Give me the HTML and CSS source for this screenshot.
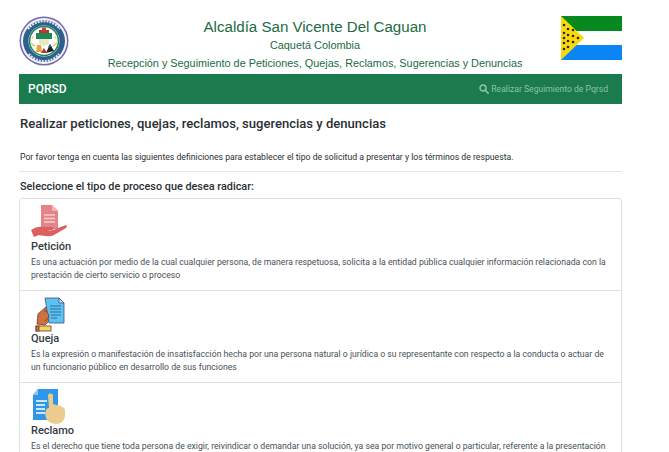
FILE: index.html
```html
<!DOCTYPE html>
<html lang="es">
<head>
<meta charset="utf-8">
<title>PQRSD</title>
<link rel="stylesheet" href="styles.css">
</head>
<body>
<div class="page">
  <header class="head">
    <svg class="logo" viewBox="0 0 50 50" aria-hidden="true">
      <circle cx="25" cy="25" r="24.500" fill="#7468ad"/>
      <circle cx="25" cy="25" r="23" fill="#f4f4fa"/>
      <circle cx="25" cy="25" r="21" fill="#2f5f8f"/>
      <circle cx="25" cy="25" r="15.500" fill="#fff"/>
      <path d="M9 13 A20 20 0 0 1 41 13 M10 38 A19 19 0 0 0 40 38" fill="none" stroke="#dfe6f0" stroke-width="2.400" stroke-dasharray="2 1"/>
      <circle cx="25" cy="25" r="14.500" fill="none" stroke="#1d8a55" stroke-width="1.600"/>
      <path d="M16 30a14 14 0 0 1-4-3M34 30a14 14 0 0 0 4-3M13 21l1 1M37 21l-1 1" stroke="#e2cf5f" stroke-width="1.800" fill="none"/>
      <path d="M20 14h10v5h-10z" fill="#b8332c"/>
      <path d="M23 11.500h4v4h-4z" fill="#c4403a"/>
      <path d="M17 17h16v6h-16z" fill="#1d8a55"/>
      <path d="M20 23h10v5l-5 2-5-2z" fill="#ece7c4"/>
      <path d="M27 37l4-9 4 7z" fill="#222"/>
      <path d="M17 36l1-7h4l1 7z" fill="#e8a43a"/>
      <path d="M22 37l3-5 3 5z" fill="#b8332c"/>
      <path d="M29 31l2-3 2 3z" fill="#2c5ea8"/>
    </svg>
    <div class="titles">
      <h1 class="title">Alcaldía San Vicente Del Caguan</h1>
      <p class="place">Caquetá Colombia</p>
      <p class="sub">Recepción y Seguimiento de Peticiones, Quejas, Reclamos, Sugerencias y Denuncias</p>
    </div>
    <svg class="flag" viewBox="0 0 61 44" aria-hidden="true">
      <rect width="61" height="15" fill="#078a1d"/>
      <rect y="15" width="61" height="14" fill="#fff"/>
      <rect y="29" width="61" height="15" fill="#0a85f5"/>
      <path d="M0 0L23 22 0 44z" fill="#f9d80f"/>
      <g fill="#2b2a10">
        <circle cx="3" cy="9" r="1.300"/><circle cx="7" cy="13" r="1.300"/><circle cx="3" cy="17" r="1.300"/>
        <circle cx="7" cy="19" r="1.300"/><circle cx="12" cy="14" r="1.300"/><circle cx="3" cy="22" r="1.300"/>
        <circle cx="12" cy="20" r="1.300"/><circle cx="17" cy="22" r="1.300"/><circle cx="7" cy="25" r="1.300"/>
        <circle cx="12" cy="26" r="1.300"/><circle cx="3" cy="27" r="1.300"/><circle cx="7" cy="31" r="1.300"/>
        <circle cx="3" cy="33" r="1.300"/>
      </g>
    </svg>
  </header>

  <nav class="bar">
    <a class="brand" href="#">PQRSD</a>
    <a class="track" href="#">
      <svg class="lens" viewBox="0 0 12 12" aria-hidden="true">
        <circle cx="4.800" cy="4.800" r="3.600" fill="none" stroke="currentColor" stroke-width="1.800"/>
        <path d="M7.500 7.500L11 11" stroke="currentColor" stroke-width="2" stroke-linecap="round"/>
      </svg>
      Realizar Seguimiento de Pqrsd
    </a>
  </nav>

  <div class="body">
    <h2 class="heading">Realizar peticiones, quejas, reclamos, sugerencias y denuncias</h2>
    <p class="intro">Por favor tenga en cuenta las siguientes definiciones para establecer el tipo de solicitud a presentar y los términos de respuesta.</p>
  </div>
  <hr class="rule">
  <h3 class="select">Seleccione el tipo de proceso que desea radicar:</h3>

  <div class="list">
    <article class="item">
      <svg class="icon" viewBox="0 0 36 36" aria-hidden="true">
        <path d="M10 0h11l6 6v18H10z" fill="#e58488"/>
        <path d="M21 0l6 6h-6z" fill="#f2b5b5"/>
        <path d="M13 10h11M13 13.500h11M13 17h11" stroke="#f6d0d0" stroke-width="1.300"/>
        <path d="M0 25c4-3 9-4 13-3h8c2 0 2 3 0 3h-5c4 1 7 0 11-2l8-3c1 1 1 2 0 3l-12 7c-4 2-10 1-15 0l-5 2z" fill="#dd5f60"/>
      </svg>
      <h4 class="name">Petición</h4>
      <p class="desc">Es una actuación por medio de la cual cualquier persona, de manera respetuosa, solicita a la entidad pública cualquier información relacionada con la prestación de cierto servicio o proceso</p>
    </article>
    <article class="item">
      <svg class="icon" viewBox="0 0 36 36" aria-hidden="true">
        <path d="M6 27l1-10 8-7 3 4 3 7-5 5-2 2z" fill="#d2703f" stroke="#6b3a2a" stroke-width=".8"/>
        <path d="M14 1h14l5 5v20H18z" fill="#5cc3ee" stroke="#3d4f8f" stroke-width=".8"/>
        <path d="M28 1l5 5h-5z" fill="#bfe6f7" stroke="#3d4f8f" stroke-width=".8"/>
        <path d="M19 9h11M19 12h11M19 15h11M20 18h10M20 21h6" stroke="#2d6ca8" stroke-width="1"/>
        <path d="M13 13c3 1 5 4 5 7l-4 4" fill="#d2703f" stroke="#6b3a2a" stroke-width=".8"/>
        <rect x="5" y="29" width="15" height="5" fill="#f4d35e" stroke="#6b3a2a" stroke-width=".8"/>
        <rect x="5" y="29" width="3" height="5" fill="#d2703f" stroke="#6b3a2a" stroke-width=".8"/>
      </svg>
      <h4 class="name">Queja</h4>
      <p class="desc">Es la expresión o manifestación de insatisfacción hecha por una persona natural o jurídica o su representante con respecto a la conducta o actuar de un funcionario público en desarrollo de sus funciones</p>
    </article>
    <article class="item">
      <svg class="icon" viewBox="0 0 36 36" aria-hidden="true">
        <path d="M7 0h20v31H2V6z" fill="#2f96e8"/>
        <path d="M7 0v6H2z" fill="#8cc4f3"/>
        <path d="M5 12h11M5 16h9M5 20h9M5 24h9" stroke="#fff" stroke-width="1.600"/>
        <path d="M17 6c1-2 5-2 5 1v8l7 2c3 1 5 2 5 5v5c-1 5-4 8-9 8-4 0-9-3-10-6-1-3-1-6 0-8 1-2 3-2 3-2z" fill="#eccb8e"/>
      </svg>
      <h4 class="name">Reclamo</h4>
      <p class="desc">Es el derecho que tiene toda persona de exigir, reivindicar o demandar una solución, ya sea por motivo general o particular, referente a la presentación</p>
    </article>
  </div>
</div>
</body>
</html>
```

FILE: styles.css
```css
* { box-sizing: border-box; }
html, body { height: 100%; overflow: hidden; }
body {
  margin: 0;
  background: #fff;
  color: #2b2f33;
  font-family: Roboto, "Liberation Sans", sans-serif;
}
.page { width: 603px; margin-left: 19px; padding-top: 16px; }
.head { display: flex; align-items: flex-start; height: 58px; }
.logo { width: 50px; height: 50px; flex: none; }
.flag { width: 61px; height: 44px; flex: none; }
.titles { flex: 1; text-align: center; color: #1a6b45; margin-top: 1px; }
.title { margin: 0; font: 400 15.100px/20px "Liberation Sans", Arial, sans-serif; }
.place { margin: -1px 0 0; font: 400 10.900px/18px "Liberation Sans", Arial, sans-serif; }
.sub { margin: 0; font: 400 10.850px/18px "Liberation Sans", Arial, sans-serif; }
.bar {
  display: flex;
  justify-content: space-between;
  align-items: center;
  height: 30px;
  padding: 0 14px 0 9px;
  background: #1b7a4e;
}
.brand { color: #fff; font-size: 12px; font-weight: 500; text-decoration: none; }
.track { color: #8cc4a8; font-size: 8.600px; text-decoration: none; display: flex; align-items: center; gap: 2px; }
.lens { width: 10px; height: 10px; }
.body { padding-left: 1px; }
.heading { margin: 11px 0 0; font-size: 13.050px; line-height: 17px; font-weight: 500; }
.intro { margin: 18px 0 0; font-size: 8.680px; line-height: 14px; }
.rule { margin: 7px 0 0; border: 0; border-top: 1px solid #e3e5e7; }
.select { margin: 8px 0 0 1px; font-size: 10.850px; line-height: 14px; font-weight: 500; }
.list { margin-top: 4px; border: 1px solid #dfdfdf; border-radius: 3px; }
.item { padding: 6px 11px 6px; border-bottom: 1px solid #dfdfdf; height: 92px; }
.icon { display: block; width: 36px; height: 36px; margin-bottom: -1px; }
.name { margin: 0; font-size: 11px; line-height: 13px; font-weight: 500; color: #343a40; }
.desc { margin: 3px 0 0; font-size: 8.680px; line-height: 13px; color: #495057; }
```
